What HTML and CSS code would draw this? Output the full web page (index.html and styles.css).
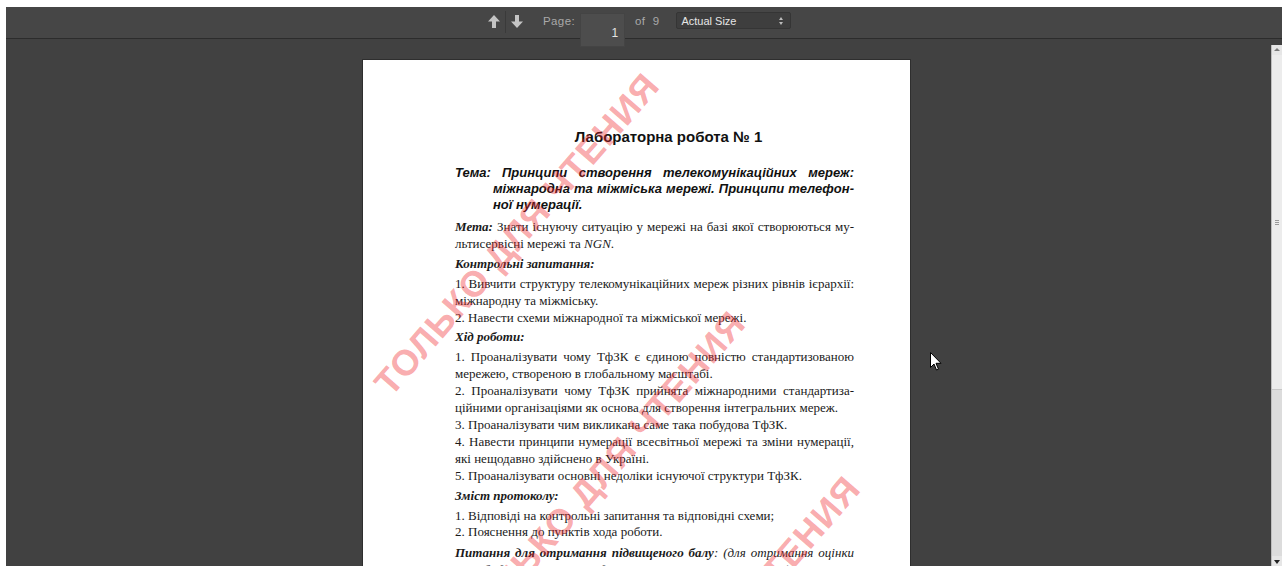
FILE: index.html
```html
<!DOCTYPE html>
<html lang="uk">
<head>
<meta charset="utf-8">
<title>Лабораторна робота № 1</title>
<link rel="stylesheet" href="styles.css">
</head>
<body>
<div class="viewer">
  <div class="toolbar">
    <div class="nav">
      <button class="nav-btn" aria-label="Previous page">
        <svg width="12" height="14" viewBox="0 0 12 14"><polygon points="6,0 12,6.5 8,6.5 8,13 4,13 4,6.5 0,6.5" fill="#c4c4c4"/></svg>
      </button>
      <span class="nav-sep"></span>
      <button class="nav-btn" aria-label="Next page">
        <svg width="12" height="14" viewBox="0 0 12 14"><polygon points="4,0 8,0 8,6.5 12,6.5 6,13 0,6.5 4,6.5" fill="#c4c4c4"/></svg>
      </button>
    </div>
    <span class="label page-label">Page:</span>
    <div class="page-input">1</div>
    <span class="label of-label">of&nbsp;&nbsp;9</span>
    <div class="scale-select">
      <span>Actual Size</span>
      <span class="spin"><i class="tri-up"></i><i class="tri-down"></i></span>
    </div>
  </div>

  <div class="content">
    <div class="canvas">
      <div class="page">
        <h1 class="title">Лабораторна робота № 1</h1>
        <p class="theme"><span class="theme-label">Тема:</span>Принципи створення телекомунікаційних мереж: міжнародна та міжміська мережі. Принципи телефон&shy;ної нумерації.</p>

        <p class="para"><b><i>Мета:</i></b> Знати існуючу ситуацію у мережі на базі якої створюються му&shy;льтисервісні мережі та <i>NGN</i>.</p>
        <p class="head">Контрольні запитання:</p>
        <p class="para">1. Вивчити структуру телекомунікаційних мереж різних рівнів ієрархії: міжнародну та міжміську.</p>
        <p class="para">2. Навести схеми міжнародної та міжміської мережі.</p>
        <p class="head">Хід роботи:</p>
        <p class="para">1. Проаналізувати чому ТфЗК є єдиною повністю стандартизованою мережею, створеною в глобальному масштабі.</p>
        <p class="para">2. Проаналізувати чому ТфЗК прийнята міжнародними стандартиза&shy;ційними організаціями як основа для створення інтегральних мереж.</p>
        <p class="para">3. Проаналізувати чим викликана саме така побудова ТфЗК.</p>
        <p class="para">4. Навести принципи нумерації всесвітньої мережі та зміни нумерації, які нещодавно здійснено в Україні.</p>
        <p class="para">5. Проаналізувати основні недоліки існуючої структури ТфЗК.</p>
        <p class="head">Зміст протоколу:</p>
        <p class="para">1. Відповіді на контрольні запитання та відповідні схеми;</p>
        <p class="para">2. Пояснення до пунктів хода роботи.</p>
        <p class="para extra"><b>Питання для отримання підвищеного балу</b>: (для отримання оцінки 9&nbsp;необхідно виконати п.1, для отримання оцінки 10 – п.1 і 2).</p>

        <span class="stamp stamp-1">ТОЛЬКО ДЛЯ ЧТЕНИЯ</span>
        <span class="stamp stamp-2">ТОЛЬКО ДЛЯ ЧТЕНИЯ</span>
        <span class="stamp stamp-3">ТОЛЬКО ДЛЯ ЧТЕНИЯ</span>
      </div>
    </div>

    <div class="scrollbar">
      <div class="sb-arrow sb-up"></div>
      <div class="sb-track">
        <div class="sb-thumb"><span class="grip"></span></div>
      </div>
      <div class="sb-arrow sb-down"></div>
    </div>

    <svg class="cursor" width="12" height="19" viewBox="0 0 12 19">
      <path d="M0.5,0.5 L0.5,15.5 L4,12 L6.5,18 L8.5,17.2 L6,11.3 L11,11.3 Z" fill="#fff" stroke="#000" stroke-width="1"/>
    </svg>
  </div>
</div>
</body>
</html>
```

FILE: styles.css
```css
html, body {
  margin: 0;
  padding: 0;
  background: #ffffff;
}

body {
  padding: 7px 0 5px 6px;
  height: 571px;
  box-sizing: border-box;
  overflow: hidden;
}

.viewer {
  height: 559px;
  background: #414141;
  display: flex;
  flex-direction: column;
  overflow: hidden;
}

/* ---- toolbar ---- */
.toolbar {
  height: 31px;
  flex: none;
  background: #464646;
  border-bottom: 1px solid #2c2c2c;
  display: flex;
  align-items: flex-start;
  padding-left: 477px;
  font-family: "Liberation Sans", Arial, sans-serif;
  font-size: 11.5px;
  color: #a9a9a9;
  position: relative;
  z-index: 2;
}

.nav {
  display: flex;
  align-items: center;
  height: 27px;
  margin-top: 1px;
}

.nav-btn {
  width: 22px;
  height: 22px;
  padding: 0;
  border: 0;
  background: transparent;
  display: flex;
  align-items: center;
  justify-content: center;
}

.nav-sep {
  width: 1px;
  height: 22px;
  background: #3a3a3a;
}

.label {
  line-height: 14px;
  margin-top: 7px;
}

.page-label {
  margin-left: 15px;
  letter-spacing: 0.4px;
}

.page-input {
  width: 45px;
  height: 34px;
  margin-top: 6px;
  margin-left: 5px;
  box-sizing: border-box;
  background: #4d4d4d;
  border: 1px solid #444444;
  color: #e4e4e4;
  font-size: 12px;
  text-align: right;
  padding: 12px 6px 0 0;
  line-height: 14px;
}

.of-label {
  margin-left: 10px;
  letter-spacing: 0.4px;
}

.scale-select {
  margin-left: 17px;
  margin-top: 5px;
  width: 115px;
  height: 17px;
  box-sizing: border-box;
  background: #3e3e3e;
  border: 1px solid #353535;
  border-radius: 2px;
  display: flex;
  align-items: center;
  justify-content: space-between;
  padding: 0 7px 0 4px;
  color: #e6e6e6;
  font-size: 11px;
}

.spin {
  display: flex;
  flex-direction: column;
  gap: 2px;
}

.tri-up,
.tri-down {
  display: block;
  border-left: 2.5px solid transparent;
  border-right: 2.5px solid transparent;
}

.tri-up { border-bottom: 3px solid #bdbdbd; }
.tri-down { border-top: 3px solid #bdbdbd; }

/* ---- document area ---- */
.content {
  flex: 1;
  display: flex;
  position: relative;
  overflow: hidden;
}

.canvas {
  flex: 1;
  display: flex;
  justify-content: center;
  padding-top: 20px;
  overflow: hidden;
}

.page {
  position: relative;
  width: 549px;
  height: 900px;
  flex: none;
  margin-left: -4px;
  box-sizing: border-box;
  background: #ffffff;
  border: 1px solid #2e2e2e;
  padding: 68px 56px 0 92px;
  color: #1a1a1a;
  overflow: hidden;
}

.title {
  margin: 0 0 19px 0;
  padding-left: 28px;
  text-align: center;
  font-family: "Liberation Sans", Arial, sans-serif;
  font-weight: bold;
  font-size: 15px;
  line-height: 18px;
  color: #111;
}

.theme {
  margin: 0 0 6px 0;
  padding-left: 38px;
  text-indent: -38px;
  text-align: justify;
  font-family: "Liberation Sans", Arial, sans-serif;
  font-weight: bold;
  font-style: italic;
  font-size: 13px;
  line-height: 16px;
  color: #111;
}

.theme-label {
  display: inline-block;
  width: 47px;
  text-indent: 0;
}

.para,
.head {
  margin: 0;
  font-family: "Liberation Serif", "Times New Roman", serif;
  font-size: 13px;
  line-height: 16.9px;
  text-align: justify;
  hyphens: manual;
}

.head {
  font-weight: bold;
  font-style: italic;
  margin: 3px 0 3px 0;
}

.extra {
  margin-top: 4px;
  font-style: italic;
}

/* read-only stamps laid diagonally over the sheet */
.stamp {
  position: absolute;
  white-space: nowrap;
  font-family: "Liberation Sans", Arial, sans-serif;
  font-weight: bold;
  font-size: 36px;
  letter-spacing: 1px;
  line-height: 36px;
  color: rgba(240, 40, 45, 0.4);
  transform-origin: 0 50%;
  transform: rotate(-49deg);
  pointer-events: none;
}

.stamp-1 { left: 19px;  top: 312px; }
.stamp-2 { left: 105px; top: 550px; }
.stamp-3 { left: 220px; top: 715px; }

/* ---- scrollbar ---- */
.scrollbar {
  width: 10px;
  flex: none;
  margin-top: 6px;
  background: #dcdcdc;
  border-left: 1px solid #bdbdbd;
  display: flex;
  flex-direction: column;
}

.sb-arrow {
  height: 10px;
  flex: none;
  position: relative;
  background: #e6e6e6;
}

.sb-up::after,
.sb-down::after {
  content: "";
  position: absolute;
  left: 2px;
  border-left: 3px solid transparent;
  border-right: 3px solid transparent;
}

.sb-up::after {
  top: 3px;
  border-bottom: 3px solid #7a7a7a;
}

.sb-down::after {
  top: 4px;
  border-top: 4px solid #222;
}

.sb-track {
  flex: 1;
}

.sb-thumb {
  height: 334px;
  background: #ececec;
  border-bottom: 1px solid #c8c8c8;
  display: flex;
  align-items: center;
  justify-content: center;
}

.grip {
  width: 4px;
  height: 5px;
  border-top: 1px solid #9a9a9a;
  border-bottom: 1px solid #9a9a9a;
  box-sizing: border-box;
  position: relative;
}

.grip::after {
  content: "";
  position: absolute;
  left: 0;
  right: 0;
  top: 1px;
  height: 1px;
  background: #9a9a9a;
}

.cursor {
  position: absolute;
  left: 924px;
  top: 313px;
}
```
